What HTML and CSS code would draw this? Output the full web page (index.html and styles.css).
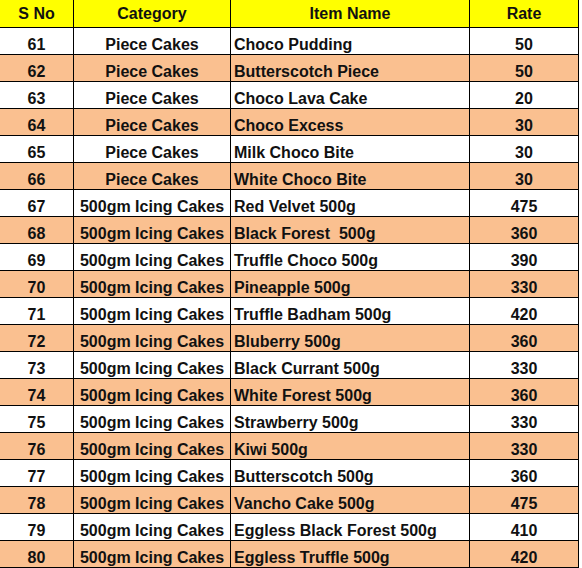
FILE: index.html
```html
<!DOCTYPE html>
<html>
<head>
<meta charset="utf-8">
<link rel="stylesheet" href="styles.css">
</head>
<body>
<table class="sheet">
<colgroup><col class="c-sno"><col class="c-cat"><col class="c-item"><col class="c-rate"></colgroup>
<thead>
<tr class="head"><th>S No</th><th>Category</th><th>Item Name</th><th>Rate</th></tr>
</thead>
<tbody>
<tr><td>61</td><td>Piece Cakes</td><td class="name">Choco Pudding</td><td>50</td></tr>
<tr class="alt"><td>62</td><td>Piece Cakes</td><td class="name">Butterscotch Piece</td><td>50</td></tr>
<tr><td>63</td><td>Piece Cakes</td><td class="name">Choco Lava Cake</td><td>20</td></tr>
<tr class="alt"><td>64</td><td>Piece Cakes</td><td class="name">Choco Excess</td><td>30</td></tr>
<tr><td>65</td><td>Piece Cakes</td><td class="name">Milk Choco Bite</td><td>30</td></tr>
<tr class="alt"><td>66</td><td>Piece Cakes</td><td class="name">White Choco Bite</td><td>30</td></tr>
<tr><td>67</td><td>500gm Icing Cakes</td><td class="name">Red Velvet 500g</td><td>475</td></tr>
<tr class="alt"><td>68</td><td>500gm Icing Cakes</td><td class="name">Black Forest&nbsp; 500g</td><td>360</td></tr>
<tr><td>69</td><td>500gm Icing Cakes</td><td class="name">Truffle Choco 500g</td><td>390</td></tr>
<tr class="alt"><td>70</td><td>500gm Icing Cakes</td><td class="name">Pineapple 500g</td><td>330</td></tr>
<tr><td>71</td><td>500gm Icing Cakes</td><td class="name">Truffle Badham 500g</td><td>420</td></tr>
<tr class="alt"><td>72</td><td>500gm Icing Cakes</td><td class="name">Bluberry 500g</td><td>360</td></tr>
<tr><td>73</td><td>500gm Icing Cakes</td><td class="name">Black Currant 500g</td><td>330</td></tr>
<tr class="alt"><td>74</td><td>500gm Icing Cakes</td><td class="name">White Forest 500g</td><td>360</td></tr>
<tr><td>75</td><td>500gm Icing Cakes</td><td class="name">Strawberry 500g</td><td>330</td></tr>
<tr class="alt"><td>76</td><td>500gm Icing Cakes</td><td class="name">Kiwi 500g</td><td>330</td></tr>
<tr><td>77</td><td>500gm Icing Cakes</td><td class="name">Butterscotch 500g</td><td>360</td></tr>
<tr class="alt"><td>78</td><td>500gm Icing Cakes</td><td class="name">Vancho Cake 500g</td><td>475</td></tr>
<tr><td>79</td><td>500gm Icing Cakes</td><td class="name">Eggless Black Forest 500g</td><td>410</td></tr>
<tr class="alt"><td>80</td><td>500gm Icing Cakes</td><td class="name">Eggless Truffle 500g</td><td>420</td></tr>
</tbody>
</table>
</body>
</html>
```
FILE: styles.css
```css
html, body {
  margin: 0;
  padding: 0;
  background: #ffffff;
}
.sheet {
  border-collapse: separate;
  border-spacing: 0;
  table-layout: fixed;
  width: 579px;
  font-family: "Liberation Sans", Arial, sans-serif;
  font-weight: bold;
  font-size: 16px;
  color: #111111;
}
.c-sno { width: 74px; }
.c-cat { width: 157px; }
.c-item { width: 239px; }
.c-rate { width: 109px; }
.sheet th,
.sheet td {
  box-sizing: content-box;
  padding: 0;
  border-right: 1px solid #000000;
  border-bottom: 1px solid #000000;
  text-align: center;
  white-space: nowrap;
  overflow: hidden;
  line-height: 18px;
}
.sheet td {
  height: 26px;
  vertical-align: bottom;
}
.head th {
  height: 27px;
  background: #ffff00;
  vertical-align: middle;
  font-weight: bold;
}
.sheet td.name {
  text-align: left;
  padding-left: 3px;
}
.alt td {
  background: #fac090;
}
```
